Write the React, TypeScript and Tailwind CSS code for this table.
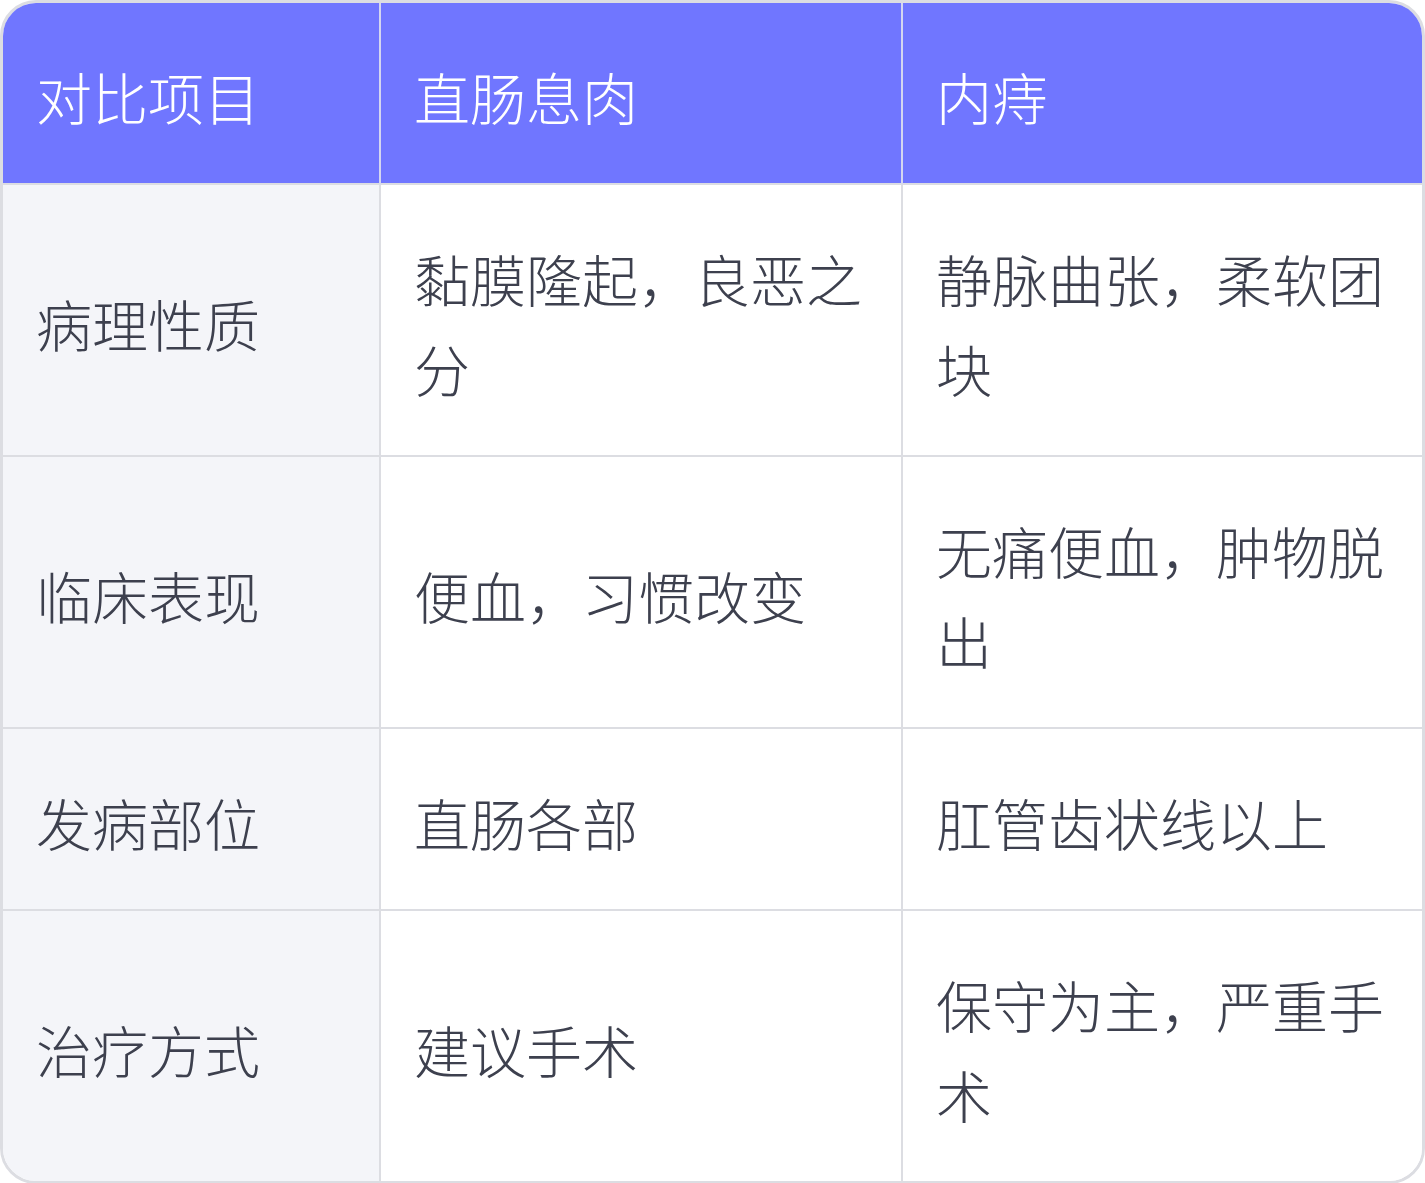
const rows: [string, string, string][] = [
  ["病理性质", "黏膜隆起，良恶之分", "静脉曲张，柔软团块"],
  ["临床表现", "便血，习惯改变", "无痛便血，肿物脱出"],
  ["发病部位", "直肠各部", "肛管齿状线以上"],
  ["治疗方式", "建议手术", "保守为主，严重手术"],
];

const cell = "pl-[33px] pr-[35px] pt-[48px] pb-[42px] flex items-center";

export default function App() {
  return (
    <div
      className="w-[1425px] overflow-hidden rounded-[36px] border-[3px] border-[#dcdde2] bg-white text-[56px] leading-[90px] font-light text-[#3d404e]"
      style={{ fontFamily: '"Noto Sans CJK SC", "Noto Sans", sans-serif' }}
    >
      <div className="grid grid-cols-[378px_522px_1fr]">
        {["对比项目", "直肠息肉", "内痔"].map((h, i) => (
          <div
            key={h}
            className={`${cell} bg-[#7076ff] text-white border-b-2 border-[#dcdde2] ${i < 2 ? "border-r-2 border-r-[#d4d6f0]" : ""}`}
          >
            {h}
          </div>
        ))}
        {rows.map((r, ri) =>
          r.map((c, ci) => (
            <div
              key={`${ri}-${ci}`}
              className={`${cell} border-[#dcdde2] ${ri < rows.length - 1 ? "border-b-2" : ""} ${ci < 2 ? "border-r-2" : ""} ${ci === 0 ? "bg-[#f4f5f9]" : "bg-white"}`}
            >
              <span>{c}</span>
            </div>
          )),
        )}
      </div>
    </div>
  );
}
